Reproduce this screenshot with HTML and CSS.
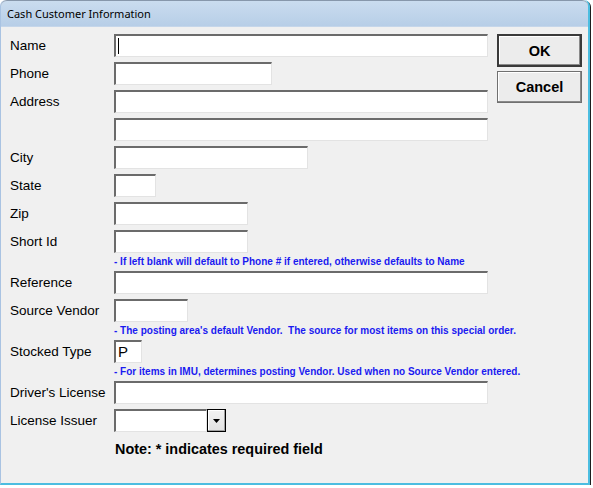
FILE: index.html
```html
<!DOCTYPE html>
<html>
<head>
<meta charset="utf-8">
<link rel="stylesheet" href="styles.css">
</head>
<body>
<div class="window">
  <div class="titlebar">Cash Customer Information</div>
  <div class="client">
    <div class="form">
      <div class="row"><span class="lbl">Name</span><div class="field w-full"><span class="caret"></span></div></div>
      <div class="row"><span class="lbl">Phone</span><div class="field w-phone"></div></div>
      <div class="row"><span class="lbl">Address</span><div class="field w-full"></div></div>
      <div class="row"><span class="lbl"></span><div class="field w-full"></div></div>
      <div class="row"><span class="lbl">City</span><div class="field w-city"></div></div>
      <div class="row"><span class="lbl">State</span><div class="field w-state"></div></div>
      <div class="row"><span class="lbl">Zip</span><div class="field w-zip"></div></div>
      <div class="row tight"><span class="lbl">Short Id</span><div class="field w-zip"></div></div>
      <div class="hint">- If left blank will default to Phone # if entered, otherwise defaults to Name</div>
      <div class="row"><span class="lbl">Reference</span><div class="field w-full"></div></div>
      <div class="row tight"><span class="lbl">Source Vendor</span><div class="field w-vendor"></div></div>
      <div class="hint">- The posting area's default Vendor.&nbsp; The source for most items on this special order.</div>
      <div class="row tight"><span class="lbl">Stocked Type</span><div class="field w-type"><span class="val">P</span></div></div>
      <div class="hint">- For items in IMU, determines posting Vendor. Used when no Source Vendor entered.</div>
      <div class="row"><span class="lbl">Driver's License</span><div class="field w-full"></div></div>
      <div class="row"><span class="lbl">License Issuer</span>
        <div class="combo">
          <div class="field w-combo"></div>
          <div class="drop"><svg width="7" height="4" viewBox="0 0 7 4"><path d="M0 0h7L3.5 4z" fill="#000"/></svg></div>
        </div>
      </div>
      <div class="note">Note: * indicates required field</div>
    </div>
    <div class="buttons">
      <div class="btn default">OK</div>
      <div class="btn">Cancel</div>
    </div>
  </div>
</div>
</body>
</html>
```

FILE: styles.css
```css
html, body {
  margin: 0;
  padding: 0;
  background: #ffffff;
}

.window {
  width: 590px;
  height: 485px;
  box-sizing: border-box;
  background: #f0f0f0;
  border-left: 1px solid #a9c3e2;
  border-right: 2px solid #4cbde0;
  border-bottom: 2px solid #4cbde0;
  box-shadow: 1px 1px 0 #1e1e1e;
  border-top-left-radius: 6px;
  border-top-right-radius: 6px;
  font-family: "Liberation Sans", Arial, sans-serif;
  display: flex;
  flex-direction: column;
}

.titlebar {
  height: 27px;
  box-sizing: border-box;
  border-top: 1px solid #8797ab;
  border-top-left-radius: 6px;
  border-top-right-radius: 6px;
  background: linear-gradient(#cadcef, #b7cee7);
  font-family: "Noto Sans", "Open Sans", sans-serif;
  font-size: 11px;
  line-height: 25px;
  color: #000;
  padding-left: 6px;
  border-bottom: 1px solid #c5d6ea;
}

.client {
  display: flex;
  padding: 7px 0 0 9px;
}

.form {
  width: 478px;
  display: flex;
  flex-direction: column;
}

.row {
  display: flex;
  align-items: center;
  height: 23px;
  margin-bottom: 5px;
}

.row.tight {
  margin-bottom: 0;
}

.lbl {
  width: 104px;
  font-size: 13.5px;
  color: #000;
  white-space: nowrap;
}

.field {
  height: 23px;
  box-sizing: border-box;
  background: #fff;
  border-top: 2px solid #6b6b6b;
  border-left: 2px solid #6b6b6b;
  border-right: 1px solid #e3e3e3;
  border-bottom: 1px solid #e3e3e3;
  box-shadow: inset -1px -1px 0 #ffffff;
  position: relative;
}

.w-full { width: 374px; }
.w-phone { width: 158px; }
.w-city { width: 194px; }
.w-state { width: 42px; }
.w-zip { width: 134px; }
.w-vendor { width: 74px; }
.w-type { width: 28px; }
.w-combo { width: 93px; }

.caret {
  position: absolute;
  left: 2px;
  top: 2px;
  width: 1px;
  height: 16px;
  background: #000;
}

.val {
  display: block;
  font-size: 15px;
  line-height: 19px;
  padding-left: 2px;
  color: #000;
}

.combo {
  display: flex;
}

.drop {
  width: 19px;
  height: 23px;
  box-sizing: border-box;
  border: 1px solid #000;
  background: linear-gradient(#f2f2f2, #e2e2e2);
  box-shadow: inset -1px -1px 0 #a0a0a0, inset 1px 1px 0 #ffffff;
  display: flex;
  align-items: center;
  justify-content: center;
}

.hint {
  height: 18px;
  box-sizing: border-box;
  padding-top: 2px;
  padding-left: 104px;
  font-size: 10px;
  font-weight: bold;
  line-height: 13px;
  color: #1a1af0;
  white-space: nowrap;
}

.note {
  margin-top: 4px;
  padding-left: 105px;
  font-size: 14.4px;
  font-weight: bold;
  line-height: 16px;
  color: #000;
}

.buttons {
  margin-left: 9px;
  display: flex;
  flex-direction: column;
  gap: 4px;
}

.btn {
  width: 85px;
  height: 32px;
  box-sizing: border-box;
  background: #ececec;
  border: 1px solid #707070;
  box-shadow: inset -1px -1px 0 #8a8a8a, inset 1px 1px 0 #ffffff;
  font-size: 14.5px;
  font-weight: bold;
  display: flex;
  align-items: center;
  justify-content: center;
  color: #000;
}

.btn.default {
  height: 33px;
  border: 2px solid #3a3a3a;
}
```
